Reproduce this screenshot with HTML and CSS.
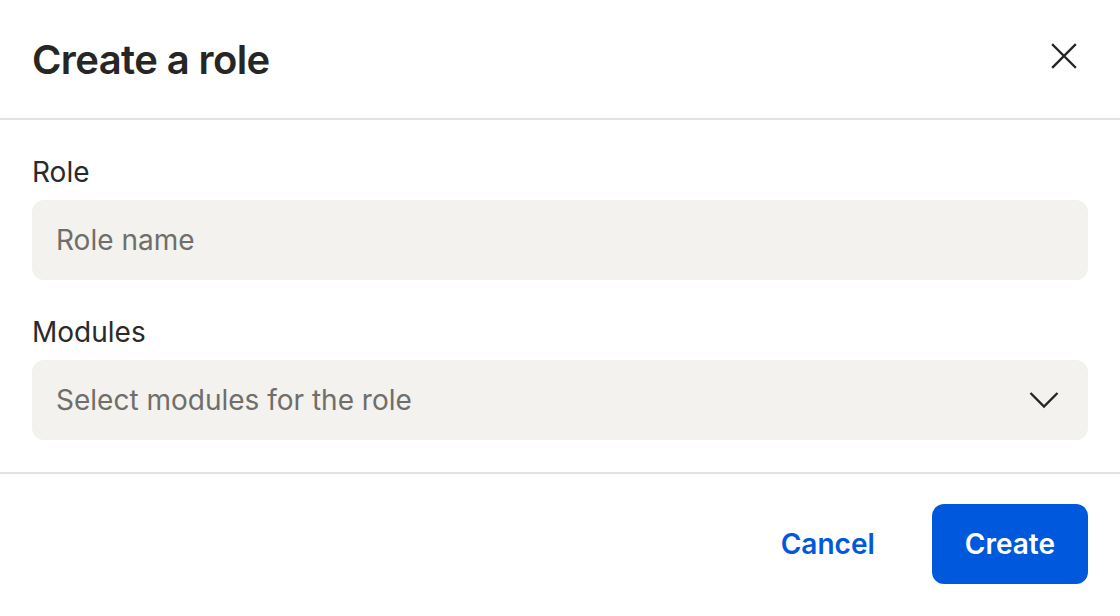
FILE: index.html
```html
<!DOCTYPE html>
<html lang="en">
<head>
<meta charset="utf-8">
<title>Create a role</title>
<link rel="stylesheet" href="styles.css">
</head>
<body>
<div class="modal">
  <header class="modal-header">
    <h1 class="modal-title">Create a role</h1>
    <button class="icon-btn close-btn" aria-label="Close">
      <svg width="40" height="40" viewBox="0 0 40 40"><path d="M9 9 L31 31 M31 9 L9 31" fill="none" stroke="#262626" stroke-width="2.4" stroke-linecap="square"/></svg>
    </button>
  </header>
  <section class="modal-body">
    <div class="field">
      <label class="field-label" for="role">Role</label>
      <input class="field-input" id="role" type="text" placeholder="Role name">
    </div>
    <div class="field">
      <label class="field-label">Modules</label>
      <div class="field-input select">
        <span class="placeholder">Select modules for the role</span>
        <svg class="chevron" width="40" height="40" viewBox="0 0 40 40"><path d="M6.5 13 L20 26.5 L33.5 13" fill="none" stroke="#262626" stroke-width="2.4"/></svg>
      </div>
    </div>
  </section>
  <footer class="modal-footer">
    <button class="btn btn-text">Cancel</button>
    <button class="btn btn-primary">Create</button>
  </footer>
</div>
</body>
</html>
```

FILE: styles.css
```css
* { box-sizing: border-box; }
html, body { margin: 0; padding: 0; background: #ffffff; }
body {
  font-family: Inter, "Noto Sans", "Liberation Sans", sans-serif;
  color: #2a2a2a;
  width: 1120px;
  height: 616px;
  overflow: hidden;
}
.modal { width: 1120px; display: flex; flex-direction: column; }
.modal-header {
  height: 120px;
  padding: 0 36px 0 32px;
  border-bottom: 2px solid #e2e2e2;
  display: flex;
  align-items: center;
  justify-content: space-between;
}
.modal-title {
  margin: 0;
  font-size: 40px;
  font-weight: 600;
  letter-spacing: -0.6px;
  color: #262626;
  line-height: 48px;
  padding-top: 2px;
}
.icon-btn {
  border: 0;
  background: transparent;
  padding: 0;
  width: 40px;
  height: 40px;
  display: flex;
  cursor: pointer;
}
.close-btn { margin-bottom: 6px; }
.modal-body {
  padding: 32px 32px 32px;
  border-bottom: 2px solid #e2e2e2;
  display: flex;
  flex-direction: column;
  gap: 32px;
}
.field { display: flex; flex-direction: column; gap: 8px; }
.field-label {
  font-size: 28px;
  line-height: 40px;
  color: #2a2a2a;
}
.field-input {
  height: 80px;
  border: 0;
  border-radius: 12px;
  background: #f3f2ee;
  padding: 0 24px;
  font-family: inherit;
  font-size: 28px;
  color: #2a2a2a;
  outline: none;
  width: 100%;
}
.field-input::placeholder { color: #6f6e6a; }
.select {
  display: flex;
  align-items: center;
  justify-content: space-between;
}
.placeholder { color: #6f6e6a; }
.chevron { display: block; }
.modal-footer {
  padding: 30px 32px 32px;
  display: flex;
  justify-content: flex-end;
  gap: 33px;
}
.btn {
  height: 80px;
  border: 0;
  border-radius: 12px;
  font-family: inherit;
  font-size: 28px;
  font-weight: 600;
  padding: 0 33px;
  cursor: pointer;
}
.btn-text { background: transparent; color: #0058dd; padding: 0 24px; }
.btn-primary { background: #0058dd; color: #ffffff; }
```
